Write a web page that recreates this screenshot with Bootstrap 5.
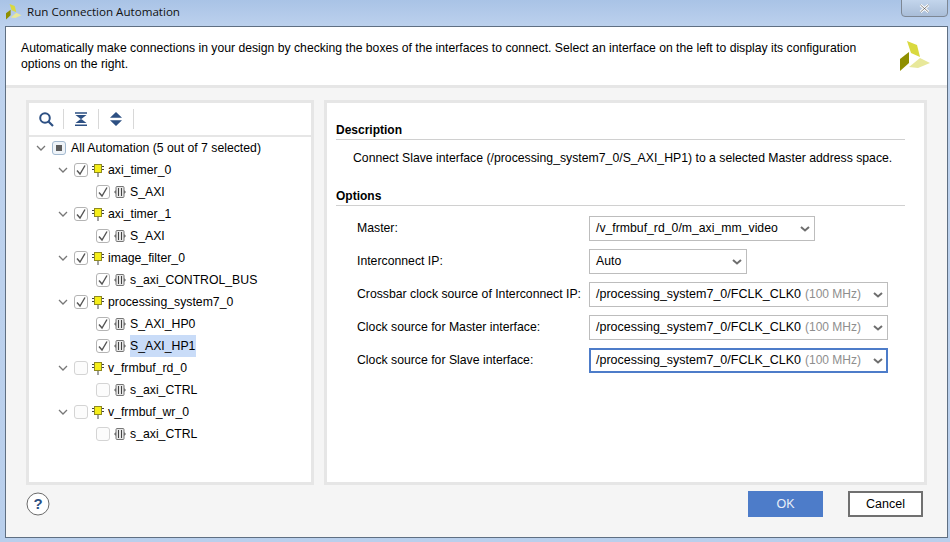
<!DOCTYPE html>
<html lang="en">
<head>
  <meta charset="UTF-8">
  <meta name="viewport" content="width=device-width, initial-scale=1">
  <title>Run Connection Automation</title>
  <link href="https://cdn.jsdelivr.net/npm/bootstrap@5.3.3/dist/css/bootstrap.min.css" rel="stylesheet">
  <style>
    html, body { height: 100%; }
    body {
      width: 950px; height: 542px; overflow: hidden;
      font-family: "Liberation Sans", Arial, sans-serif; font-size: 12.25px; color: #000;
      background: linear-gradient(#a9c3e6, #bfd3ee 30px, #b9cfec);
    }
    .win-title { height: 26px; padding: 0 0 2px 6px; }
    .win-title span { font-family: "Open Sans", sans-serif; font-size: 11.6px; margin-left: 5px; color: #111; }
    .win-close {
      position: absolute; top: -1px; left: 901px; width: 47px; height: 18px;
      border: 1px solid #7d8794; border-radius: 0 0 4px 4px; background: linear-gradient(#c3d5ec, #a9bdd8);
    }
    .dlg { height: 512px; margin: 0 2px 0 5px; width: 943px; border: 1px solid #5f6f82; background: #f5f5f5; }
    .dlg-head { height: 61px; padding: 13px 15px 0; background: #fff; border-bottom: 3px solid #e6e6e6; line-height: 16px; }
    .dlg-head p { width: 860px; margin: 0; font-size: 12.2px; }
    .dlg-logo { width: 31px; height: 31px; margin: 1px 1px 0 0; }
    .dlg-main { height: 397px; padding: 12px 20px 0; gap: 10px; }
    .pane { background: #fff; border: 3px solid #e6e6e6; height: 385px; }
    .tree-pane { width: 288px; }
    .opt-pane { width: 603px; padding: 20px 19px 0 9px; }
    .tools { height: 34px; border-bottom: 2px solid #e6e6e6; padding-top: 6px; }
    .tool { width: 35px; height: 20px; padding-top: 3px; border-right: 1px solid #d8d8d8; }
    .node { height: 22px; }
    .node-txt { padding-top: 1px; }
    .lv0 { padding-left: 7px; }
    .lv1 { padding-left: 29px; }
    .lv2 { padding-left: 67px; }
    .chev { width: 16px; }
    .cbx { width: 14px; height: 14px; border: 1px solid #b4b4b4; border-radius: 3px; background: #fff; margin-right: 4px; flex: none; }
    .cbx-off { border-color: #d4d4d4; background: #fcfcfc; }
    .cbx-mix { border-color: #a3b9cf; background: #eef3f8; margin-right: 5px; }
    .cbx-mix i { display: block; width: 6px; height: 6px; background: #5c5c5c; }
    .ico { margin-right: 4px; flex: none; }
    .sel-node { background: #c9dcf8; padding-right: 1px; height: 22px; line-height: 21px; }
    .sec-head { font-weight: 700; font-size: 12px; border-bottom: 1px solid #d0d0d0; height: 17px; line-height: 14px; }
    .desc { padding: 9px 0 0 17px; height: 49px; }
    .opts { padding: 6px 0 0 21px; }
    .opt-row { height: 33px; }
    .opt-row label { width: 232px; flex: none; }
    .pick {
      height: 25px; border: 1px solid #bdbdbd; background: #fff; padding: 0 4px 0 6px;
      flex: none;
    }
    .pick-clk { font-size: 12.5px; }
    .pick em { font-style: normal; font-size: 12px; color: #8e8e8e; margin-left: 4px; }
    .pick-on { border: 2px solid #4d7cc9; padding: 0 3px 0 5px; }
    .w226 { width: 226px; }
    .w158 { width: 158px; }
    .w299 { width: 299px; }
    .dlg-foot { padding: 6px 24px 0 20px; height: 52px; }
    .help { width: 24px; height: 24px; margin-top: 1px; }
    .act {
      width: 75px; height: 26px; border-radius: 0; font-size: 12.5px; padding: 0; line-height: 22px;
    }
    .act-ok { background: #4d7cc9; color: #e8eef8; border: 0; margin-right: 25px; }
    .act-cancel { background: #fff; color: #000; border: 2px solid #707070; }
  </style>
</head>
<body>

<svg width="0" height="0" class="position-absolute">
  <symbol id="logo" viewBox="900 41 31 31">
    <polygon points="907,41 917,45 920,57 911,53" fill="#d9d93f"/>
    <polygon points="920,58 930,63 918,68 909,67" fill="#e8e89a"/>
    <polygon points="909,52 909,63 900,71 900,59" fill="#8f8f00"/>
  </symbol>
  <symbol id="block" viewBox="0 0 12 13">
    <path d="M0 2.5h3M9 2.5h3M0 5.5h3M9 5.5h3M6 9v4" stroke="#444" stroke-width="1" fill="none"/>
    <rect x="2.5" y="0.5" width="7" height="8" fill="#f5ee1a" stroke="#8f8a20"/>
  </symbol>
  <symbol id="port" viewBox="0 0 12 12">
    <path d="M0 6l2-2v4zM12 6l-2-2v4z" fill="#666"/>
    <rect x="2" y="0.5" width="8" height="11" rx="1" fill="#e6e6e6" stroke="#777"/>
    <path d="M4.5 2v8M7.5 2v8" stroke="#444"/>
  </symbol>
  <symbol id="chev" viewBox="0 0 10 6">
    <path d="M1 1l4 4 4-4" fill="none" stroke="#777" stroke-width="1.3"/>
  </symbol>
  <symbol id="chev-pick" viewBox="0 0 10 6">
    <path d="M1 1l4 3.5 4-3.5" fill="none" stroke="#6e6e6e" stroke-width="2"/>
  </symbol>
  <symbol id="tick" viewBox="0 0 12 12">
    <path d="M2 6.5l3 3.5 5-8.5" fill="none" stroke="#555" stroke-width="1.4"/>
  </symbol>
</svg>

<div class="win-title d-flex align-items-center">
  <svg width="16" height="16"><use href="#logo"/></svg>
  <span>Run Connection Automation</span>
</div>
<div class="win-close d-flex align-items-center justify-content-center">
  <svg width="11" height="9" viewBox="0 0 11 9"><path d="M1.5 1l8 7M9.5 1l-8 7" stroke="#fff" stroke-width="2.6"/><path d="M1.5 1l8 7M9.5 1l-8 7" stroke="#555" stroke-width=".7"/></svg>
</div>

<div class="dlg d-flex flex-column">
  <div class="dlg-head d-flex justify-content-between">
    <p>Automatically make connections in your design by checking the boxes of the interfaces to connect. Select an interface on the left to display its configuration options on the right.</p>
    <svg class="dlg-logo"><use href="#logo"/></svg>
  </div>

  <div class="dlg-main d-flex">
    <div class="pane tree-pane">
      <div class="tools d-flex">
        <div class="tool d-flex justify-content-center">
          <svg width="15" height="15" viewBox="0 0 15 15"><circle cx="6" cy="6" r="4.8" fill="none" stroke="#2d5083" stroke-width="2"/><path d="M9.5 9.5l4.5 4.5" stroke="#2d5083" stroke-width="2.2"/></svg>
        </div>
        <div class="tool d-flex justify-content-center">
          <svg width="12" height="14" viewBox="0 0 12 14"><path d="M0.5 3h11L6 7.2zM0.5 11h11L6 6.8z" fill="#2d5083"/><path d="M0 1h12M0 13.2h12" stroke="#2d5083" stroke-width="1.6"/></svg>
        </div>
        <div class="tool d-flex justify-content-center">
          <svg width="12" height="14" viewBox="0 0 12 14"><path d="M6 0l6 5.8H0zM6 14L0 8.2h12z" fill="#2d5083"/></svg>
        </div>
      </div>
      <div id="tree"></div>
    </div>

    <div class="pane opt-pane">
      <div class="sec-head">Description</div>
      <div class="desc">Connect Slave interface (/processing_system7_0/S_AXI_HP1) to a selected Master address space.</div>
      <div class="sec-head">Options</div>
      <div class="opts">
        <div class="opt-row d-flex align-items-center">
          <label>Master:</label>
          <div class="pick w226 d-flex align-items-center justify-content-between"><span>/v_frmbuf_rd_0/m_axi_mm_video</span><svg width="10" height="6"><use href="#chev-pick"/></svg></div>
        </div>
        <div class="opt-row d-flex align-items-center">
          <label>Interconnect IP:</label>
          <div class="pick w158 d-flex align-items-center justify-content-between"><span>Auto</span><svg width="10" height="6"><use href="#chev-pick"/></svg></div>
        </div>
        <div class="opt-row d-flex align-items-center">
          <label>Crossbar clock source of Interconnect IP:</label>
          <div class="pick pick-clk w299 d-flex align-items-center justify-content-between"><span>/processing_system7_0/FCLK_CLK0<em>(100 MHz)</em></span><svg width="10" height="6"><use href="#chev-pick"/></svg></div>
        </div>
        <div class="opt-row d-flex align-items-center">
          <label>Clock source for Master interface:</label>
          <div class="pick pick-clk w299 d-flex align-items-center justify-content-between"><span>/processing_system7_0/FCLK_CLK0<em>(100 MHz)</em></span><svg width="10" height="6"><use href="#chev-pick"/></svg></div>
        </div>
        <div class="opt-row d-flex align-items-center">
          <label>Clock source for Slave interface:</label>
          <div class="pick pick-clk pick-on w299 d-flex align-items-center justify-content-between"><span>/processing_system7_0/FCLK_CLK0<em>(100 MHz)</em></span><svg width="10" height="6"><use href="#chev-pick"/></svg></div>
        </div>
      </div>
    </div>
  </div>

  <div class="dlg-foot d-flex align-items-start justify-content-between">
    <svg class="help" viewBox="0 0 24 24"><circle cx="12" cy="12" r="11" fill="#fff" stroke="#6b6b6b"/><text x="12" y="17" text-anchor="middle" font-family="Liberation Sans" font-weight="700" font-size="15" fill="#2d5083">?</text></svg>
    <div class="d-flex">
      <button type="button" class="btn act act-ok">OK</button>
      <button type="button" class="btn act act-cancel">Cancel</button>
    </div>
  </div>
</div>

<script>
// nivel, nombre, marcado, seleccionado
const filas = [
  [1, "axi_timer_0", true],
  [2, "S_AXI", true],
  [1, "axi_timer_1", true],
  [2, "S_AXI", true],
  [1, "image_filter_0", true],
  [2, "s_axi_CONTROL_BUS", true],
  [1, "processing_system7_0", true],
  [2, "S_AXI_HP0", true],
  [2, "S_AXI_HP1", true, true],
  [1, "v_frmbuf_rd_0", false],
  [2, "s_axi_CTRL", false],
  [1, "v_frmbuf_wr_0", false],
  [2, "s_axi_CTRL", false]
];
const chev = '<span class="chev d-flex"><svg width="10" height="6"><use href="#chev"/></svg></span>';
let html = `<div class="node lv0 d-flex align-items-center">${chev}<span class="cbx cbx-mix d-flex align-items-center justify-content-center"><i></i></span><span class="node-txt">All Automation (5 out of 7 selected)</span></div>`;
filas.forEach(([lv, nombre, marcado, sel]) => {
  const caja = `<span class="cbx ${marcado ? "" : "cbx-off"} d-flex align-items-center justify-content-center">${marcado ? '<svg width="12" height="12"><use href="#tick"/></svg>' : ""}</span>`;
  const ico = lv === 1
    ? '<svg class="ico" width="12" height="13"><use href="#block"/></svg>'
    : '<svg class="ico" width="12" height="12"><use href="#port"/></svg>';
  html += `<div class="node lv${lv} d-flex align-items-center">${lv === 1 ? chev : ""}${caja}${ico}<span class="node-txt ${sel ? "sel-node" : ""}">${nombre}</span></div>`;
});
document.getElementById("tree").innerHTML = html;
</script>
<script src="https://cdn.jsdelivr.net/npm/bootstrap@5.3.3/dist/js/bootstrap.bundle.min.js"></script>
</body>
</html>
